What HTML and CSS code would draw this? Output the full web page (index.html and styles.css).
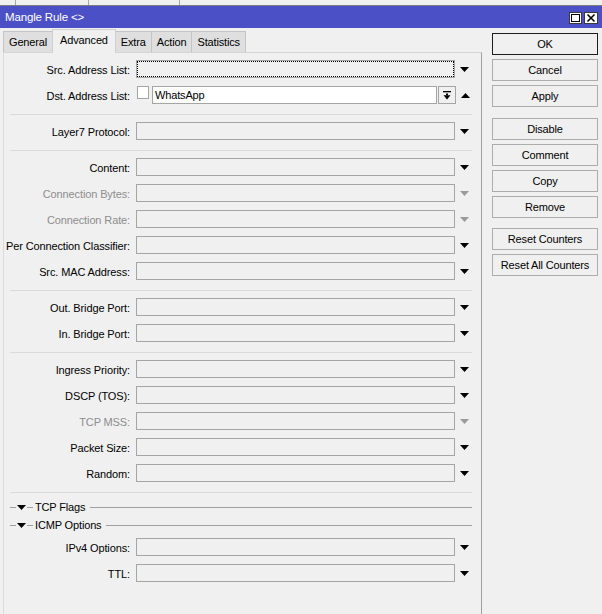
FILE: index.html
```html
<!DOCTYPE html>
<html>
<head>
<meta charset="utf-8">
<link rel="stylesheet" href="styles.css">
</head>
<body>
<div class="strip"><span class="sc sc1"></span><span class="sc sc2"></span><span class="sc sc3"></span></div>
<div class="title">
  <span class="ttext">Mangle Rule &lt;&gt;</span>
  <span class="tbtns">
    <span class="tb"><svg width="11" height="10" viewBox="0 0 11 10"><rect x="1.5" y="1.5" width="8" height="7" fill="none" stroke="#000" stroke-width="1"/></svg></span>
    <span class="tb tbx"><svg width="12" height="10" viewBox="0 0 12 10"><path d="M2.5 1.5L9.5 8.5M9.5 1.5L2.5 8.5" stroke="#000" stroke-width="1.6"/></svg></span>
  </span>
</div>
<div class="main">
  <div class="left">
    <div class="tabs">
      <div class="tab">General</div>
      <div class="tab sel">Advanced</div>
      <div class="tab">Extra</div>
      <div class="tab">Action</div>
      <div class="tab">Statistics</div>
    </div>
    <div class="panel">
      <div class="form">
        <div class="row"><span class="lbl">Src. Address List:</span><span class="fld focus"></span><svg class="arr" width="9" height="5" viewBox="0 0 9 5"><path d="M0 0H9L4.5 5Z"/></svg></div>
        <div class="row"><span class="lbl">Dst. Address List:</span><span class="chk"></span><span class="fld white dst">WhatsApp</span><span class="dbtn"><svg width="8" height="9" viewBox="0 0 8 9"><rect x="0" y="0" width="8" height="1.3"/><rect x="3" y="2.5" width="2" height="2"/><path d="M0.5 4.3H7.5L4 8.5Z"/></svg></span><svg class="arr" width="9" height="5" viewBox="0 0 9 5"><path d="M0 5H9L4.5 0Z"/></svg></div>
        <div class="sep"></div>
        <div class="row"><span class="lbl">Layer7 Protocol:</span><span class="fld"></span><svg class="arr" width="9" height="5" viewBox="0 0 9 5"><path d="M0 0H9L4.5 5Z"/></svg></div>
        <div class="sep"></div>
        <div class="row"><span class="lbl">Content:</span><span class="fld"></span><svg class="arr" width="9" height="5" viewBox="0 0 9 5"><path d="M0 0H9L4.5 5Z"/></svg></div>
        <div class="row dis"><span class="lbl">Connection Bytes:</span><span class="fld"></span><svg class="arr" width="9" height="5" viewBox="0 0 9 5"><path d="M0 0H9L4.5 5Z"/></svg></div>
        <div class="row dis"><span class="lbl">Connection Rate:</span><span class="fld"></span><svg class="arr" width="9" height="5" viewBox="0 0 9 5"><path d="M0 0H9L4.5 5Z"/></svg></div>
        <div class="row"><span class="lbl">Per Connection Classifier:</span><span class="fld"></span><svg class="arr" width="9" height="5" viewBox="0 0 9 5"><path d="M0 0H9L4.5 5Z"/></svg></div>
        <div class="row"><span class="lbl">Src. MAC Address:</span><span class="fld"></span><svg class="arr" width="9" height="5" viewBox="0 0 9 5"><path d="M0 0H9L4.5 5Z"/></svg></div>
        <div class="sep"></div>
        <div class="row"><span class="lbl">Out. Bridge Port:</span><span class="fld"></span><svg class="arr" width="9" height="5" viewBox="0 0 9 5"><path d="M0 0H9L4.5 5Z"/></svg></div>
        <div class="row"><span class="lbl">In. Bridge Port:</span><span class="fld"></span><svg class="arr" width="9" height="5" viewBox="0 0 9 5"><path d="M0 0H9L4.5 5Z"/></svg></div>
        <div class="sep"></div>
        <div class="row"><span class="lbl">Ingress Priority:</span><span class="fld"></span><svg class="arr" width="9" height="5" viewBox="0 0 9 5"><path d="M0 0H9L4.5 5Z"/></svg></div>
        <div class="row"><span class="lbl">DSCP (TOS):</span><span class="fld"></span><svg class="arr" width="9" height="5" viewBox="0 0 9 5"><path d="M0 0H9L4.5 5Z"/></svg></div>
        <div class="row dis"><span class="lbl">TCP MSS:</span><span class="fld"></span><svg class="arr" width="9" height="5" viewBox="0 0 9 5"><path d="M0 0H9L4.5 5Z"/></svg></div>
        <div class="row"><span class="lbl">Packet Size:</span><span class="fld"></span><svg class="arr" width="9" height="5" viewBox="0 0 9 5"><path d="M0 0H9L4.5 5Z"/></svg></div>
        <div class="row"><span class="lbl">Random:</span><span class="fld"></span><svg class="arr" width="9" height="5" viewBox="0 0 9 5"><path d="M0 0H9L4.5 5Z"/></svg></div>
        <div class="sep"></div>
        <div class="hdr hdr1"><span class="dash"></span><svg class="htri" width="9" height="5" viewBox="0 0 9 5"><path d="M0 0H9L4.5 5Z"/></svg><span class="dash"></span><span class="htext">TCP Flags</span><span class="hline"></span></div>
        <div class="hdr hdr2"><span class="dash"></span><svg class="htri" width="9" height="5" viewBox="0 0 9 5"><path d="M0 0H9L4.5 5Z"/></svg><span class="dash"></span><span class="htext">ICMP Options</span><span class="hline"></span></div>
        <div class="row"><span class="lbl">IPv4 Options:</span><span class="fld"></span><svg class="arr" width="9" height="5" viewBox="0 0 9 5"><path d="M0 0H9L4.5 5Z"/></svg></div>
        <div class="row"><span class="lbl">TTL:</span><span class="fld"></span><svg class="arr" width="9" height="5" viewBox="0 0 9 5"><path d="M0 0H9L4.5 5Z"/></svg></div>
      </div>
    </div>
  </div>
  <div class="right">
    <div class="btn def">OK</div>
    <div class="btn">Cancel</div>
    <div class="btn">Apply</div>
    <div class="btn g1">Disable</div>
    <div class="btn">Comment</div>
    <div class="btn">Copy</div>
    <div class="btn">Remove</div>
    <div class="btn g2">Reset Counters</div>
    <div class="btn">Reset All Counters</div>
  </div>
</div>
</body>
</html>
```
FILE: styles.css
```css
html, body {
  margin: 0;
  padding: 0;
  background: #f0f0f0;
  overflow: hidden;
}
body {
  font-family: "Liberation Sans", Arial, sans-serif;
  font-size: 11px;
  letter-spacing: -0.15px;
  color: #000;
  width: 602px;
  height: 614px;
}
.strip {
  height: 5px;
  display: flex;
  border-bottom: 1px solid #7d7d7d;
  background: #f0f0f0;
}
.sc {
  border-right: 1px solid #a8a8a8;
  box-sizing: border-box;
}
.sc1 { width: 16px; }
.sc2 { width: 73px; }
.sc3 { width: 91px; }
.title {
  height: 22px;
  background: #4b50c6;
  display: flex;
  align-items: center;
  padding: 0 4px 0 5px;
}
.ttext {
  color: #fff;
  font-size: 11.5px;
  flex: 1;
}
.tbtns {
  display: flex;
  gap: 2px;
  padding-top: 1px;
}
.tb {
  width: 13px;
  height: 12px;
  box-sizing: border-box;
  border: 1px solid #3a3a3a;
  background: #fff;
  display: flex;
  align-items: center;
  justify-content: center;
}
.tbx { width: 14px; }
.main {
  display: flex;
}
.left {
  width: 482px;
  padding: 1px 0 0 3px;
  box-sizing: border-box;
}
.tabs {
  display: flex;
  align-items: flex-end;
  height: 23px;
}
.tab {
  height: 21px;
  box-sizing: border-box;
  border: 1px solid #c4c4c4;
  border-bottom: none;
  margin-right: -1px;
  background: #dfdfdf;
  padding: 0 5px;
  line-height: 20px;
}
.tab.sel {
  height: 24px;
  margin-bottom: -1px;
  background: #f0f0f0;
  padding: 0 7px;
  line-height: 20px;
  position: relative;
  z-index: 1;
  border-color: #d0d0d0;
}
.panel {
  border-top: 1px solid #d6d6d6;
  border-left: 1px solid #dcdcdc;
  border-right: 1px solid #a0a0a0;
  height: 562px;
  box-sizing: border-box;
  overflow: hidden;
}
.form {
  display: flex;
  flex-direction: column;
  gap: 8px;
  padding-top: 7px;
}
.row {
  display: flex;
  align-items: center;
  height: 18px;
}
.lbl {
  width: 126px;
  margin-right: 6px;
  padding-top: 1px;
  text-align: right;
  white-space: nowrap;
  letter-spacing: -0.12px;
}
.fld {
  width: 319px;
  height: 18px;
  box-sizing: border-box;
  border: 1px solid #a5a5a5;
  background: #f0f0f0;
  line-height: 17px;
  padding-left: 2px;
}
.fld.focus {
  outline: 1px dotted #000;
  outline-offset: -2px;
}
.fld.white { background: #fff; }
.fld.dst {
  width: 285px;
  margin-left: 3px;
}
.chk {
  width: 12px;
  height: 13px;
  box-sizing: border-box;
  border: 1px solid #a5a5a5;
  background: #fff;
  align-self: flex-start;
  margin-left: 1px;
}
.dbtn {
  width: 18px;
  height: 18px;
  box-sizing: border-box;
  border: 1px solid #a5a5a5;
  margin-left: 1px;
  display: flex;
  align-items: center;
  justify-content: center;
}
.dbtn svg { fill: #000; }
.arr {
  margin-left: 5px;
  fill: #000;
  display: block;
}
.dis .lbl { color: #8d8d8d; }
.dis .arr { fill: #9a9a9a; }
.sep {
  height: 1px;
  margin: 2px 9px -1px 6px;
  background: #dadada;
}
.hdr {
  height: 14px;
  display: flex;
  align-items: center;
}
.hdr1 { margin-bottom: -4px; }
.hdr2 { margin-bottom: -2px; }
.dash {
  width: 6px;
  height: 1px;
  background: #a0a0a0;
}
.hdr .dash:first-child { margin-left: 6px; }
.htri {
  margin: 0 1px;
  fill: #000;
  display: block;
}
.htext {
  margin-left: 2px;
  white-space: nowrap;
}
.hline {
  flex: 1;
  height: 1px;
  background: #a0a0a0;
  margin: 0 9px 0 5px;
}
.right {
  width: 106px;
  margin-left: 10px;
  padding-top: 5px;
  display: flex;
  flex-direction: column;
  gap: 4px;
}
.btn {
  height: 22px;
  box-sizing: border-box;
  border: 1px solid #adadad;
  background: #f0f0f0;
  text-align: center;
  line-height: 20px;
  white-space: nowrap;
}
.btn.def { border-color: #1e1e1e; }
.btn.g1 { margin-top: 7px; }
.btn.g2 { margin-top: 6px; }
```
